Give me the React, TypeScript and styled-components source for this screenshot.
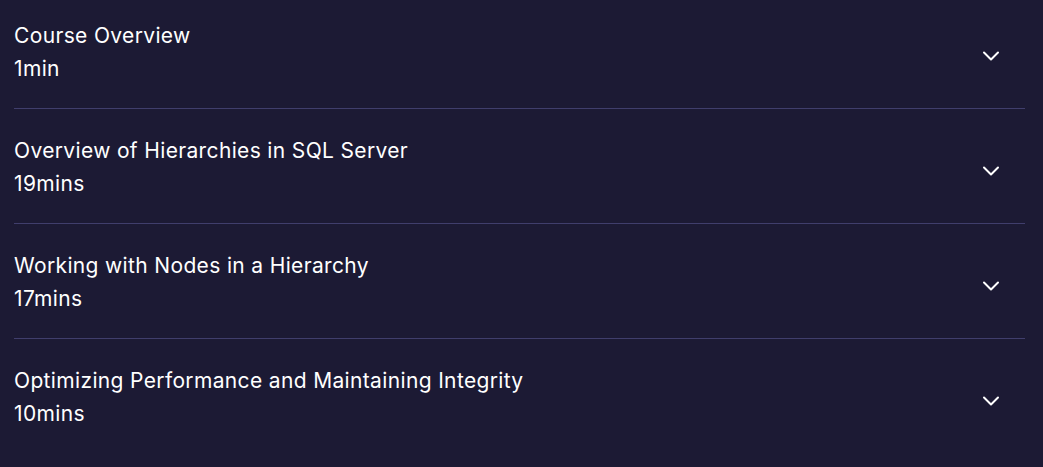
import React from "react";
import styled, { createGlobalStyle } from "styled-components";

const Global = createGlobalStyle`
  html, body {
    margin: 0;
    padding: 0;
    background: #1c1a34;
  }
  body {
    font-family: Inter, "Open Sans", sans-serif;
    color: #ffffff;
    overflow: hidden;
  }
`;

const List = styled.ul`
  list-style: none;
  margin: 0;
  padding: 0 18px 0 14px;
`;

const Row = styled.li`
  display: flex;
  align-items: center;
  justify-content: space-between;
  padding: 25px 0 23px;
  border-bottom: 1px solid #403e6c;
  &:first-child {
    padding-top: 19px;
  }
  &:last-child {
    border-bottom: none;
  }
`;

const Info = styled.div`
  display: flex;
  flex-direction: column;
`;

const Title = styled.span`
  font-size: 21px;
  line-height: 33px;
  letter-spacing: 0.35px;
  font-weight: 400;
`;

const Duration = styled.span`
  font-size: 21px;
  line-height: 33px;
  letter-spacing: 0.35px;
  font-weight: 400;
`;

const Toggle = styled.button`
  display: flex;
  align-items: center;
  justify-content: center;
  width: 32px;
  height: 32px;
  margin-right: 18px;
  margin-top: 8px;
  padding: 0;
  border: none;
  background: transparent;
  color: #ffffff;
  cursor: pointer;
`;

const Chevron = () => (
  <svg width="18" height="12" viewBox="0 0 18 12" fill="none">
    <path d="M2 2.5 L9 9.5 L16 2.5" stroke="currentColor" strokeWidth="2" strokeLinecap="round" strokeLinejoin="round" />
  </svg>
);

const modules = [
  { title: "Course Overview", duration: "1min" },
  { title: "Overview of Hierarchies in SQL Server", duration: "19mins" },
  { title: "Working with Nodes in a Hierarchy", duration: "17mins" },
  { title: "Optimizing Performance and Maintaining Integrity", duration: "10mins" },
];

export default function App() {
  return (
    <>
      <Global />
      <List>
        {modules.map((m) => (
          <Row key={m.title}>
            <Info>
              <Title>{m.title}</Title>
              <Duration>{m.duration}</Duration>
            </Info>
            <Toggle aria-label={`Expand ${m.title}`}>
              <Chevron />
            </Toggle>
          </Row>
        ))}
      </List>
    </>
  );
}
